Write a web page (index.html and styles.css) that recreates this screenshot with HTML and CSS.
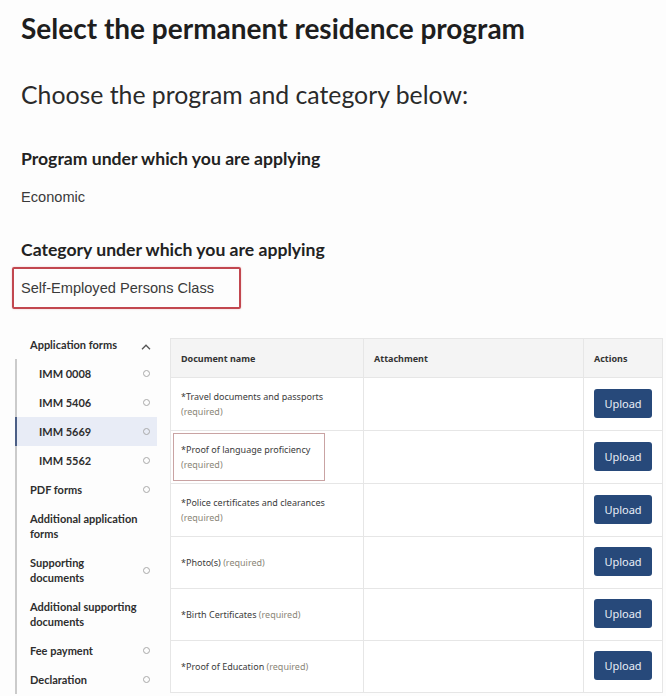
FILE: index.html
```html
<!DOCTYPE html>
<html lang="en">
<head>
<meta charset="utf-8">
<title>Select the permanent residence program</title>
<link rel="stylesheet" href="styles.css">
</head>
<body>
<div class="page">
  <h1 class="title">Select the permanent residence program</h1>
  <p class="lead">Choose the program and category below:</p>

  <h2 class="label">Program under which you are applying</h2>
  <p class="value">Economic</p>

  <h2 class="label label-cat">Category under which you are applying</h2>
  <p class="value value-boxed">Self-Employed Persons Class</p>
</div>

<div class="workspace">
  <nav class="sidebar">
    <div class="side-head">
      <span>Application forms</span>
      <svg class="caret" width="10" height="6" viewBox="0 0 10 6"><path d="M1 5.2L5 1.2L9 5.2" fill="none" stroke="#555" stroke-width="1.3"/></svg>
    </div>
    <ul class="side-list">
      <li class="item sub"><span>IMM 0008</span><i class="dot"></i></li>
      <li class="item sub"><span>IMM 5406</span><i class="dot"></i></li>
      <li class="item sub active"><span>IMM 5669</span><i class="dot"></i></li>
      <li class="item sub"><span>IMM 5562</span><i class="dot"></i></li>
      <li class="item"><span>PDF forms</span><i class="dot"></i></li>
      <li class="item"><span class="wide">Additional application forms</span></li>
      <li class="item"><span class="narrow">Supporting documents</span><i class="dot"></i></li>
      <li class="item"><span class="wide">Additional supporting documents</span></li>
      <li class="item"><span>Fee payment</span><i class="dot"></i></li>
      <li class="item"><span>Declaration</span><i class="dot"></i></li>
    </ul>
  </nav>

  <table class="docs">
    <colgroup>
      <col class="c-name"><col class="c-att"><col class="c-act">
    </colgroup>
    <thead>
      <tr><th>Document name</th><th>Attachment</th><th>Actions</th></tr>
    </thead>
    <tbody>
      <tr>
        <td>*Travel documents and passports<br><span class="req">(required)</span></td>
        <td></td>
        <td><button class="upload">Upload</button></td>
      </tr>
      <tr>
        <td class="marked-cell"><div class="marked">*Proof of language proficiency<br><span class="req">(required)</span></div></td>
        <td></td>
        <td><button class="upload">Upload</button></td>
      </tr>
      <tr>
        <td>*Police certificates and clearances<br><span class="req">(required)</span></td>
        <td></td>
        <td><button class="upload">Upload</button></td>
      </tr>
      <tr class="short">
        <td>*Photo(s) <span class="req">(required)</span></td>
        <td></td>
        <td><button class="upload">Upload</button></td>
      </tr>
      <tr class="short">
        <td>*Birth Certificates <span class="req">(required)</span></td>
        <td></td>
        <td><button class="upload">Upload</button></td>
      </tr>
      <tr class="short">
        <td>*Proof of Education <span class="req">(required)</span></td>
        <td></td>
        <td><button class="upload">Upload</button></td>
      </tr>
    </tbody>
  </table>
</div>
</body>
</html>
```

FILE: styles.css
```css
html, body {
  margin: 0;
  padding: 0;
  background: #fdfdfd;
  color: #222;
}

.page {
  padding: 11px 0 0 21px;
}

.title {
  margin: 0;
  font-family: Lato, "Liberation Sans", sans-serif;
  font-weight: 700;
  font-size: 28px;
  line-height: 34px;
  color: #1e1e1e;
}

.lead {
  margin: 35px 0 0;
  font-family: Lato, "Liberation Sans", sans-serif;
  font-weight: 400;
  font-size: 24.8px;
  line-height: 30px;
  color: #2a2a2a;
}

.label {
  margin: 38px 0 0;
  font-family: Lato, "Liberation Sans", sans-serif;
  font-weight: 700;
  font-size: 17.6px;
  line-height: 22px;
  color: #222;
}

.label-cat {
  margin-top: 33px;
}

.value {
  margin: 18px 0 0;
  font-family: "Liberation Sans", Arial, sans-serif;
  font-size: 14.6px;
  line-height: 18px;
  color: #3a3a3a;
}

.value-boxed {
  display: inline-block;
  margin: 6px 0 0 -9px;
  padding: 10px 25px 10px 7px;
  border: 2px solid #c2474f;
  border-radius: 2px;
  box-shadow: 0 0 2px rgba(194, 71, 79, 0.35);
}

/* lower area */
.workspace {
  display: flex;
  align-items: flex-start;
  gap: 13px;
  margin-top: 21px;
}

.sidebar {
  width: 142px;
  margin-left: 15px;
  font-family: Lato, "Liberation Sans", sans-serif;
  font-weight: 700;
  font-size: 11px;
  line-height: 15px;
  color: #2e2e2e;
}

.side-head {
  display: flex;
  align-items: center;
  justify-content: space-between;
  height: 29px;
  padding: 0 6px 0 15px;
}

.caret {
  margin-top: 4px;
}

.side-list {
  list-style: none;
  margin: 0;
  padding: 0;
  border-left: 2px solid #cbcbcb;
}

.item {
  display: flex;
  align-items: center;
  justify-content: space-between;
  padding: 7px 7px 7px 13px;
}

.item.sub {
  padding-left: 22px;
}

.item .wide {
  max-width: 118px;
}

.item .narrow {
  max-width: 96px;
}

.item.active {
  margin-left: -2px;
  border-left: 2px solid #4c5f86;
  background: #e8ecf6;
}

.dot {
  display: block;
  flex: none;
  width: 5px;
  height: 5px;
  border: 1px solid #a9a9a9;
  border-radius: 50%;
}

/* table */
.docs {
  width: 492px;
  margin-top: 8px;
  border-collapse: collapse;
  table-layout: fixed;
  font-family: "Noto Sans", "Open Sans", sans-serif;
  font-size: 9px;
  line-height: 15px;
  color: #3b3b3b;
  background: #fff;
}

.c-name { width: 193px; }
.c-att { width: 220px; }
.c-act { width: 79px; }

.docs th,
.docs td {
  border: 1px solid #e6e6e6;
  padding: 0 10px;
  text-align: left;
  vertical-align: middle;
}

.docs th {
  height: 38px;
  background: #f4f4f4;
  font-weight: 700;
  color: #333;
}

.docs td {
  height: 52px;
}

.docs tr.short td {
  height: 51px;
}

.req {
  color: #8a8678;
}

.docs td.marked-cell {
  padding-left: 2px;
}

.marked {
  width: 143px;
  height: 46px;
  display: flex;
  flex-direction: column;
  justify-content: center;
  padding-left: 7px;
  border: 1px solid #c9a3a3;
}

.upload {
  display: block;
  width: 58px;
  height: 29px;
  margin-top: -2px;
  padding: 0;
  border: none;
  border-radius: 3px;
  background: #27497a;
  color: #e9eef6;
  font-family: "Noto Sans", "Open Sans", sans-serif;
  font-size: 11px;
}
```
